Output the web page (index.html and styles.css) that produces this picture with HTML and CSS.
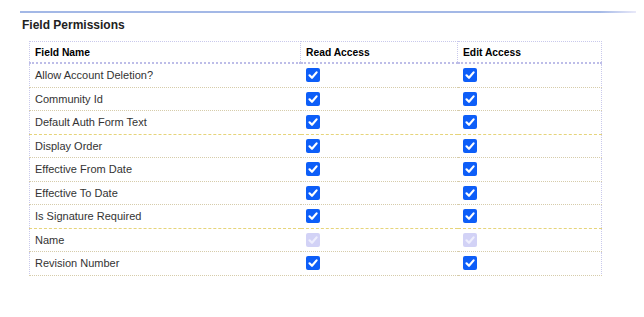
FILE: index.html
```html
<!DOCTYPE html>
<html lang="en">
<head>
    <meta charset="UTF-8">
    <title>Field Permissions</title>
    <link rel="stylesheet" href="styles.css">
</head>
<body>
    <div class="section">
        <div class="section-rule"></div>
        <h2 class="section-title">Field Permissions</h2>
        <table class="perm-table">
            <thead>
                <tr>
                    <th class="col-name">Field Name</th>
                    <th class="col-read">Read Access</th>
                    <th class="col-edit">Edit Access</th>
                </tr>
            </thead>
            <tbody id="permRows"></tbody>
        </table>
    </div>
    <script>
        // field, read, edit, locked (shown greyed out), group break after row
        const fields = [
            ["Allow Account Deletion?", true, true, false, false],
            ["Community Id", true, true, false, false],
            ["Default Auth Form Text", true, true, false, true],
            ["Display Order", true, true, false, false],
            ["Effective From Date", true, true, false, false],
            ["Effective To Date", true, true, false, false],
            ["Is Signature Required", true, true, false, true],
            ["Name", true, true, true, false],
            ["Revision Number", true, true, false, false]
        ];
        const tick = '<svg viewBox="0 0 14 14" width="14" height="14"><path d="M3.5 7.3 L6 9.8 L10.6 4.4" fill="none" stroke="#fff" stroke-width="2.2" stroke-linecap="round" stroke-linejoin="round"/></svg>';
        function box(checked, locked) {
            let cls = 'check';
            if (checked) cls += ' on';
            if (locked) cls += ' locked';
            return `<span class="${cls}">${checked ? tick : ''}</span>`;
        }
        let rows = "";
        fields.forEach(([name, read, edit, locked, brk]) => {
            rows += `<tr${brk ? " class='group-end'" : ""}><td>${name}</td><td>${box(read, locked)}</td><td>${box(edit, locked)}</td></tr>`;
        });
        document.getElementById('permRows').innerHTML = rows;
    </script>
</body>
</html>
```

FILE: styles.css
```css
body {
    margin: 0;
    padding: 0;
    background: #fff;
    font-family: 'Liberation Sans', Arial, sans-serif;
    color: #333;
}
.section {
    padding: 11px 8px 0 20px;
}
.section-rule {
    height: 2px;
    background: linear-gradient(to right, #a3b8e6 0%, #a3b8e6 94%, rgba(200, 200, 240, 0.4) 100%);
}
.section-title {
    margin: 4px 0 0 2px;
    font-size: 12px;
    font-weight: bold;
    color: #222;
    line-height: 16px;
}
.perm-table {
    margin: 8px 0 0 9px;
    width: 573px;
    border-collapse: collapse;
    font-size: 11px;
}
.perm-table th {
    text-align: left;
    font-weight: bold;
    font-size: 10.3px;
    color: #000;
    height: 20px;
    padding: 0 0 0 5px;
    border-top: 1px dotted #c9c9ec;
    border-left: 1px dotted #c9c9ec;
    border-right: 1px dotted #c9c9ec;
    border-bottom: 2px dotted #bdbde8;
}
.perm-table .col-name { width: 265px; }
.perm-table .col-read { width: 151px; }
.perm-table td {
    height: 22.5px;
    padding: 0 0 0 5px;
    border-bottom: 1px dotted #d6ccaa;
    vertical-align: middle;
}
.perm-table td:first-child {
    border-left: 1px dotted #c9c9ec;
}
.perm-table td:last-child {
    border-right: 1px dotted #c9c9ec;
}
.perm-table tr.group-end td {
    border-bottom: 1px dashed #e6d47a;
}
.check {
    display: block;
    width: 14px;
    height: 14px;
    border-radius: 2px;
    background: #c9c9ec;
}
.check svg {
    display: block;
}
.check.on {
    background: #0d5ef8;
}
.check.locked {
    background: #d2d2f6;
}
.check.locked svg path {
    stroke: #eeeefd;
}
```
